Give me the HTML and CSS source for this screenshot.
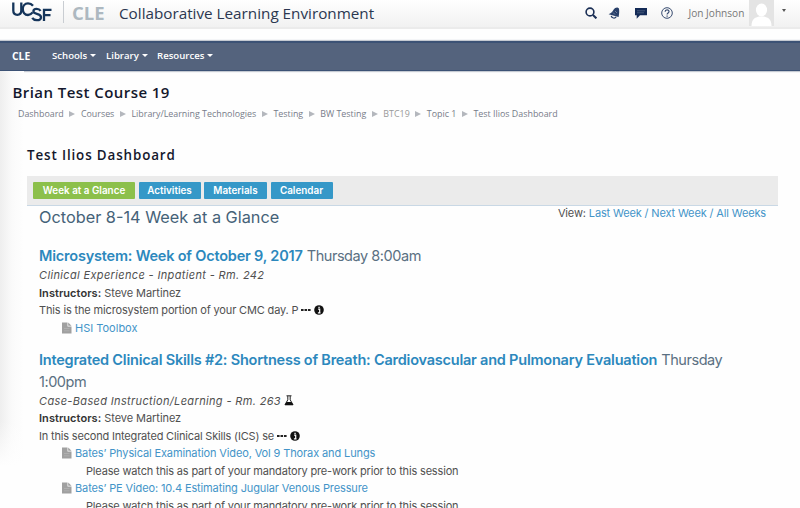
FILE: index.html
```
<!DOCTYPE html>
<html lang="en">
<head>
<meta charset="utf-8">
<title>Test Ilios Dashboard</title>
<link rel="stylesheet" href="styles.css">
</head>
<body>
<svg class="symbols" width="0" height="0">
  <symbol id="file" viewBox="0 0 10 12"><path d="M0 .5h5.500V4.500H9.500V11.500H0z" fill="#a0a0a0"/><path d="M6.200.5 9.500 3.800H6.200z" fill="#a0a0a0"/><path d="M2 6.500h5.500M2 8.800h5.500" stroke="#b6b6b6" stroke-width=".7"/></symbol>
  <symbol id="info" viewBox="0 0 10 10"><circle cx="5" cy="5" r="4.800" fill="#111"/><path d="M4.100 4.200h1.600v3.600M3.900 7.900h2.600M4.400 2.300h1.300" stroke="#fff" stroke-width="1.200" fill="none"/></symbol>
  <symbol id="dots" viewBox="0 0 10 4"><path d="M0 1h2.600v2H0zM3.500 1h2.600v2H3.500zM7 1h2.600v2H7z" fill="#222"/></symbol>
</svg>
<div class="page">
  <header class="top">
    <svg class="logo" viewBox="0 0 40 22"><g fill="none" stroke="#15355b" stroke-width="2.300"><path d="M1.300 2.500v8c0 3 1.600 4.300 4 4.300s4-1.300 4-4.300v-8"/><path d="M21 5.700C19.500 3.800 17.800 3.400 16 3.400c-3.400 0-5.200 2.700-5.200 5.700s1.900 5.900 5.200 5.900c2 0 3.300-.8 4.700-2.600"/><path d="M28.600 10.800c-1-1.500-2.400-2-4-2-1.900 0-3.200.8-3.200 2.400 0 3.600 7.600 1.500 7.600 6 0 2-1.700 3-4.200 3-2 0-3.600-.8-4.600-2.300"/><path d="M32 21V9.900h7.500M32 15.200h6.500"/></g></svg>
    <span class="divider"></span>
    <span class="brand">CLE</span>
    <span class="site">Collaborative Learning Environment</span>
    <div class="tools">
      <svg class="tool" viewBox="0 0 12 12"><g fill="none" stroke="#1b2f55"><circle cx="5" cy="5" r="3.900" stroke-width="1.600"/><path d="m8 8 3.400 3.400" stroke-width="2"/></g></svg>
      <svg class="tool bell" viewBox="0 0 12 12"><path d="M9.500.5 11 1.600c.4 3 .2 5.400-.4 8.400L.6 7.300C3.500 5.800 4.500 4.800 5.700 2.500 6.500 1.200 8 .3 9.500.5z" fill="#29406a"/><path d="M3.200 8.900c.4 2.300 3.700 3 5 .9" fill="none" stroke="#29406a" stroke-width="1.200"/><path d="m7 4 2 2M5 5.500l2 2" stroke="#8796b2" stroke-width=".7"/></svg>
      <svg class="tool chat" viewBox="0 0 12 12"><path d="M0 1h12v7.300H5L1.700 11.700V8.300H0z" fill="#142b57"/><path d="M2 3.800h8M2 5.800h7" stroke="#5a6b8d" stroke-width=".7"/></svg>
      <svg class="tool help" viewBox="0 0 12 12"><circle cx="6" cy="6" r="5.300" fill="none" stroke="#384c70"/><path d="M4.100 4.700c0-2.400 3.900-2.400 3.900-.2C8 6 6.100 5.800 6.100 7.500M6.100 8.400v1.300" fill="none" stroke="#384c70" stroke-width="1.200"/></svg>
      <span class="user">Jon Johnson</span>
      <svg class="avatar" viewBox="0 0 25 26"><path d="M0 0h25v26H0z" fill="#e4e4e4"/><ellipse cx="12.500" cy="10" rx="5.600" ry="6.500" fill="#fff"/><path d="M2.500 26c0-7 3.500-8.500 7.500-9.500h5c4 1 7.500 2.500 7.500 9.500z" fill="#fff"/></svg>
      <span class="caret dark"></span>
    </div>
  </header>
  <nav class="nav">
    <span class="nav-home">CLE</span>
    <span class="nav-item schools">Schools<i class="caret"></i></span>
    <span class="nav-item library">Library<i class="caret"></i></span>
    <span class="nav-item resources">Resources<i class="caret"></i></span>
  </nav>
  <main class="main">
    <h1 class="course">Brian Test Course 19</h1>
    <div class="crumbs"><span>Dashboard</span><i></i><span>Courses</span><i></i><span>Library/Learning Technologies</span><i></i><span>Testing</span><i></i><span>BW Testing</span><i></i><span class="muted">BTC19</span><i></i><span>Topic 1</span><i></i><span>Test Ilios Dashboard</span></div>
    <h2 class="title">Test Ilios Dashboard</h2>
    <div class="tabs"><span class="tab active">Week at a Glance</span><span class="tab activities">Activities</span><span class="tab materials">Materials</span><span class="tab calendar">Calendar</span></div>
    <div class="content">
      <div class="week"><h3>October 8-14 Week at a Glance</h3><div class="view">View: <a>Last Week / Next Week / All Weeks</a></div></div>
      <section class="session first">
        <h4><b>Microsystem: Week of October 9, 2017</b> <span>Thursday 8:00am</span></h4>
        <p class="type">Clinical Experience - Inpatient - Rm. 242</p>
        <p class="teach"><b>Instructors:</b> Steve Martinez</p>
        <p class="desc">This is the microsystem portion of your CMC day. P<svg class="dots"><use href="#dots"/></svg><svg class="info"><use href="#info"/></svg></p>
        <p class="file short"><svg><use href="#file"/></svg><a>HSI Toolbox</a></p>
      </section>
      <section class="session second">
        <h4><b>Integrated Clinical Skills #2: Shortness of Breath: Cardiovascular and Pulmonary Evaluation</b> <span>Thursday<br>1:00pm</span></h4>
        <p class="type">Case-Based Instruction/Learning - Rm. 263<svg class="flask" viewBox="0 0 10 11"><path d="M2.500.8h5M3.800 1v3.800L1 9.800h8L6.200 4.800V1" fill="none" stroke="#222"/><path d="M2.500 7h5L9.300 10H.7z" fill="#111"/></svg></p>
        <p class="teach"><b>Instructors:</b> Steve Martinez</p>
        <p class="desc">In this second Integrated Clinical Skills (ICS) se<svg class="dots"><use href="#dots"/></svg><svg class="info"><use href="#info"/></svg></p>
        <p class="file"><svg><use href="#file"/></svg><a>Bates’ Physical Examination Video, Vol 9 Thorax and Lungs</a></p>
        <p class="note">Please watch this as part of your mandatory pre-work prior to this session</p>
        <p class="file"><svg><use href="#file"/></svg><a>Bates’ PE Video: 10.4 Estimating Jugular Venous Pressure</a></p>
        <p class="note">Please watch this as part of your mandatory pre-work prior to this session</p>
      </section>
    </div>
  </main>
</div>
</body>
</html>
```
FILE: styles.css
```
* { box-sizing: border-box; }
html, body { margin: 0; height: 508px; overflow: hidden; }
body { background: #fefefe; font-family: Inter, "Liberation Sans", sans-serif; color: #505050; }
h1, h2, h3, h4, p { margin: 0; font-weight: 400; }
.symbols { position: absolute; }
.page { width: 800px; height: 508px; overflow: hidden; white-space: nowrap; }
.top { display: flex; height: 29px; align-items: flex-start; padding-left: 12px; background: linear-gradient(#fff, #f1f1f1); border-bottom: 2px solid #ebebeb; font-family: "Open Sans", sans-serif; }
.logo { width: 40px; height: 22px; flex: none; }
.divider { width: 1px; height: 22px; margin: 1px 0 0 11px; background: #c9cdd2; }
.brand { width: 47px; margin-left: 8px; font-size: 18.500px; font-weight: 700; line-height: 25px; color: #adb8c0; }
.site { font-size: 15.250px; line-height: 27px; color: #2b3750; }
.tools { display: flex; align-items: center; margin-left: auto; height: 26px; }
.tool { flex: none; width: 12px; height: 12px; margin-right: 14px; }
.tool.bell { margin: 0 15px 0 -3px; }
.tool.help { margin-right: 15.500px; }
.user { width: 60px; font-size: 10.100px; color: #777; }
.avatar { flex: none; width: 25px; height: 26px; }
.caret { display: inline-block; width: 0; border: 3px solid transparent; border-top: 3px solid #fff; border-bottom: 0; margin-left: 3px; vertical-align: 2px; }
.caret.dark { border-width: 3px 2.500px 0; border-top-color: #555; margin: -5px 14.500px 0 8px; }
.nav { display: flex; height: 30px; margin-top: 12px; padding-left: 12px; background: #54637d; border-top: 2px solid #3c5275; border-bottom: 1px solid #3c5275; box-shadow: 0 0 1px 1px #c5cad2; color: #fff; font: 600 9.600px/26px "Open Sans", sans-serif; }
.nav-home { width: 40px; font-size: 10.300px; font-weight: 700; }
.schools { width: 54px; }
.library { width: 51px; }
.main { height: 437px; background: linear-gradient(rgba(254, 254, 254, 0) 350px, #fefefe 395px), linear-gradient(90deg, #eee, #fafafa 12px, #fefefe 24px) 0 0 / 24px 395px no-repeat; }
.course { padding: 10px 0 0 12.500px; font: 600 15px/22px "Open Sans", sans-serif; letter-spacing: .44px; color: #14182d; }
.crumbs { display: flex; align-items: center; padding: 2px 0 0 18px; height: 20px; font: 8.900px/16px "Open Sans", sans-serif; color: #777c89; }
.crumbs i { border: 3px solid transparent; border-left: 6px solid #b4b7bd; border-right: 0; margin: 0 5.550px; }
.crumbs .muted { color: #999; }
.title { padding: 20px 0 0 27px; font: 600 13.400px/24px "Open Sans", sans-serif; letter-spacing: .87px; color: #14182d; }
.tabs { display: flex; gap: 3.500px; width: 751px; height: 30px; margin: 9px 0 0 27px; padding: 6px; background: #ebebeb; border-bottom: 1px solid #c9d8e5; }
.tab { height: 17px; border-radius: 1px; background: #3598c8; color: #fff; font-size: 9.900px; font-weight: 600; line-height: 17px; text-align: center; }
.tab.active { width: 102px; background: #8cc04b; }
.activities { width: 62px; }
.materials { width: 63px; }
.calendar { width: 62px; }
.content { padding: 0 34px 0 39px; font-size: 11px; line-height: 17.600px; }
.week { display: flex; justify-content: space-between; height: 39px; }
.week h3 { font-size: 16.300px; line-height: 22px; color: #456278; }
.view { line-height: 15px; letter-spacing: -.14px; }
a { color: #4394c8; }
.session { height: 146px; }
.session.first { height: 103.500px; }
h4 { font-size: 14.500px; line-height: 22px; color: #5a7082; }
h4 b { font-weight: 600; letter-spacing: -.2px; color: #2c88bd; }
h4 span { letter-spacing: -.45px; }
.second h4 b { letter-spacing: -.215px; }
.type { font-style: italic; letter-spacing: .35px; }
.teach { letter-spacing: -.06px; }
.teach b { font-weight: 600; letter-spacing: .05px; color: #333; }
.desc { letter-spacing: -.15px; }
.second .desc { letter-spacing: -.18px; }
.dots { width: 10px; height: 4px; margin: 0 2.500px 0 3px; vertical-align: 2px; }
.info { width: 10px; height: 10px; vertical-align: -1px; }
.flask { width: 10px; height: 11px; margin-left: 3px; vertical-align: -1px; }
.file { padding-left: 23px; letter-spacing: -.12px; }
.file.short { letter-spacing: 0; }
.file svg { width: 10px; height: 12px; margin-right: 3px; vertical-align: -2px; }
.note { padding-left: 47px; letter-spacing: -.17px; }
```
